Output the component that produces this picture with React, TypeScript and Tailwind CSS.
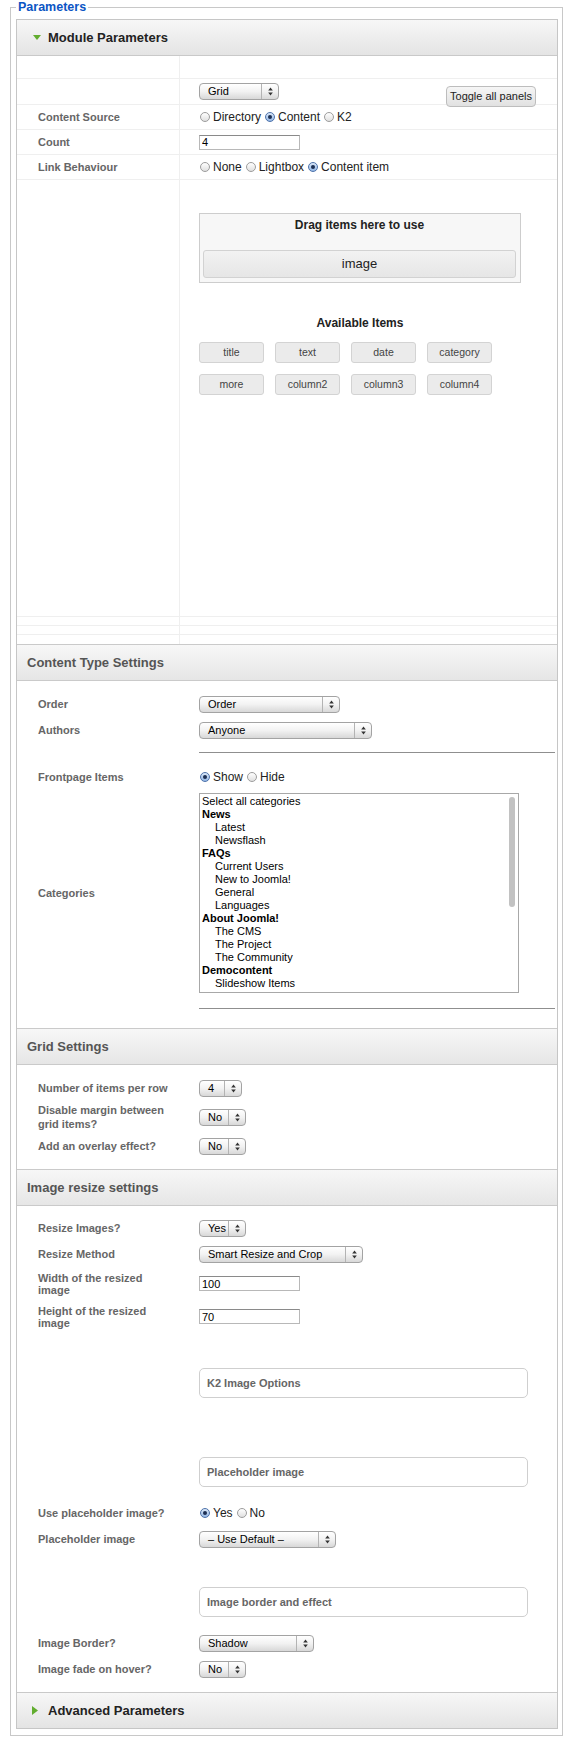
import React from 'react';

// Mac-style double arrow used in the select widgets
function Arrows() {
  return (
    <svg width="5" height="9" viewBox="0 0 5 9" className="block">
      <path d="M2.5 0.6 L4.8 3.6 L0.2 3.6 Z" fill="#333" />
      <path d="M2.5 8.4 L4.8 5.4 L0.2 5.4 Z" fill="#333" />
    </svg>
  );
}

function Select({ value, w }: { value: string; w: string }) {
  return (
    <div
      className={`flex h-[17px] ${w} items-stretch rounded-[4px] border border-[#a3a3a3] bg-linear-to-b from-white via-[#f2f2f2] to-[#d8d8d8] text-[11px] leading-none text-black`}
    >
      <span className="flex flex-1 items-center overflow-hidden whitespace-nowrap pl-[8px]">{value}</span>
      <span className="flex w-[17px] shrink-0 items-center justify-center border-l border-[#b3b3b3]">
        <Arrows />
      </span>
    </div>
  );
}

function Radio({ checked }: { checked?: boolean }) {
  if (checked) {
    return (
      <span className="flex h-[10px] w-[10px] items-center justify-center rounded-full border border-[#4d72aa] bg-linear-to-b from-[#dbe8f8] to-[#93b6e4]">
        <span className="h-[4px] w-[4px] rounded-full bg-[#1c2f52]" />
      </span>
    );
  }
  return <span className="h-[10px] w-[10px] rounded-full border border-[#9c9c9c] bg-linear-to-b from-white to-[#e0e0e0]" />;
}

function Radios({ options, checked }: { options: string[]; checked: number }) {
  return (
    <div className="ml-[1px] flex items-center text-[12px] leading-none text-[#222]">
      {options.map((o, i) => (
        <label key={o} className="mr-[4px] flex items-center">
          <Radio checked={i === checked} />
          <span className="ml-[3px]">{o}</span>
        </label>
      ))}
    </div>
  );
}

function TextInput({ value }: { value: string }) {
  return (
    <input
      readOnly
      value={value}
      className="h-[15px] w-[101px] border border-[#b8b8b8] border-t-[#8a8a8a] bg-white pl-[2px] text-[11px] leading-none text-black outline-none"
    />
  );
}

function Label({ children, lead = 'leading-[12px]' }: { children: React.ReactNode; lead?: string }) {
  return (
    <div className={`w-[162px] shrink-0 pl-[21px] pr-[6px] text-[11px] font-bold ${lead} text-[#666]`}>{children}</div>
  );
}

function Row({
  label,
  h,
  lead,
  mt = '',
  children,
}: {
  label: string;
  h: string;
  lead?: string;
  mt?: string;
  children?: React.ReactNode;
}) {
  return (
    <div className={`flex items-center ${h} ${mt}`}>
      <Label lead={lead}>{label}</Label>
      <div className="flex flex-1 items-center pl-[20px]">{children}</div>
    </div>
  );
}

// rows of the module parameter table, with the column divider
function TableRow({
  h,
  label,
  last,
  children,
}: {
  h: string;
  label?: string;
  last?: boolean;
  children?: React.ReactNode;
}) {
  return (
    <div className={`flex ${h} ${last ? '' : 'border-b border-[#efefef]'}`}>
      <div className="flex w-[163px] shrink-0 items-center border-r border-[#efefef] pl-[21px] text-[11px] font-bold text-[#666]">
        {label}
      </div>
      <div className="flex min-w-0 flex-1 items-center pl-[19px]">{children}</div>
    </div>
  );
}

function SectionHeader({ title }: { title: string }) {
  return (
    <div className="flex h-[37px] items-center border-y border-[#cacaca] bg-linear-to-b from-[#f7f7f7] to-[#e6e6e6] pl-[10px] text-[13px] font-bold text-[#555]">
      {title}
    </div>
  );
}

function InfoBox({ title, mt }: { title: string; mt: string }) {
  return (
    <div
      className={`${mt} ml-[182px] flex h-[30px] w-[329px] items-center rounded-[5px] border border-[#cfcfcf] pl-[7px] text-[11px] font-bold text-[#666]`}
    >
      {title}
    </div>
  );
}

const AVAILABLE = ['title', 'text', 'date', 'category', 'more', 'column2', 'column3', 'column4'];

const CATEGORIES: { name: string; level: 0 | 1 | 2 }[] = [
  { name: 'Select all categories', level: 0 },
  { name: 'News', level: 1 },
  { name: 'Latest', level: 2 },
  { name: 'Newsflash', level: 2 },
  { name: 'FAQs', level: 1 },
  { name: 'Current Users', level: 2 },
  { name: 'New to Joomla!', level: 2 },
  { name: 'General', level: 2 },
  { name: 'Languages', level: 2 },
  { name: 'About Joomla!', level: 1 },
  { name: 'The CMS', level: 2 },
  { name: 'The Project', level: 2 },
  { name: 'The Community', level: 2 },
  { name: 'Democontent', level: 1 },
  { name: 'Slideshow Items', level: 2 },
];

export default function App() {
  return (
    <div className="min-h-[1745px] bg-white font-['Liberation_Sans',Arial,sans-serif] text-[#222]">
      <fieldset className="ml-[10px] mr-[11px] border border-[#c8c8c8] pb-[6px] pl-[5px] pr-[4px] pt-[5px]">
        <legend className="px-[2px] text-[12.5px] font-bold leading-[14px] text-[#0b55c4]">Parameters</legend>

        <div className="border border-[#c6c6c6]">
          {/* Module Parameters */}
          <div className="flex h-[36px] items-center border-b border-[#c9c9c9] bg-linear-to-b from-[#f7f7f7] to-[#e4e4e4] pl-[16px]">
            <svg width="8" height="5" viewBox="0 0 8 5" className="block">
              <path d="M0 0 L8 0 L4 5 Z" fill="#62ad2f" />
            </svg>
            <span className="ml-[7px] text-[13px] font-bold text-[#222]">Module Parameters</span>
          </div>

          <TableRow h="h-[23px]" />
          <TableRow h="h-[26px]">
            <div className="flex h-full w-full items-center justify-between">
              <Select value="Grid" w="w-[80px]" />
              <button className="mr-[21px] mt-[9px] h-[21px] w-[90px] rounded-[4px] border border-[#bdbdbd] bg-linear-to-b from-[#f6f6f6] to-[#e1e1e1] text-[11px] leading-none text-[#222]">
                Toggle all panels
              </button>
            </div>
          </TableRow>
          <TableRow h="h-[25px]" label="Content Source">
            <Radios options={['Directory', 'Content', 'K2']} checked={1} />
          </TableRow>
          <TableRow h="h-[25px]" label="Count">
            <TextInput value="4" />
          </TableRow>
          <TableRow h="h-[25px]" label="Link Behaviour">
            <Radios options={['None', 'Lightbox', 'Content item']} checked={2} />
          </TableRow>
          <div className="flex h-[437px] border-b border-[#efefef]">
            <div className="w-[163px] shrink-0 border-r border-[#efefef]" />
            <div className="flex-1 pl-[19px] pt-[33px]">
              <div className="h-[70px] w-[322px] border border-[#cdcdcd] bg-[#f7f7f7] pb-[4px] pl-[3px] pr-[4px] pt-[4px]">
                <div className="text-center text-[12px] font-bold leading-[14px] text-[#222]">Drag items here to use</div>
                <div className="mt-[18px] flex h-[28px] items-center justify-center rounded-[3px] border border-[#d2d2d2] bg-linear-to-b from-[#f2f2f2] to-[#e6e6e6] text-[13px] text-[#222]">
                  image
                </div>
              </div>
              <div className="mt-[33px] w-[322px] text-center text-[12px] font-bold leading-[14px] text-[#222]">
                Available Items
              </div>
              <div className="mt-[12px] grid grid-cols-[repeat(4,65px)] gap-x-[11px] gap-y-[11px]">
                {AVAILABLE.map((a) => (
                  <div
                    key={a}
                    className="flex h-[21px] items-center justify-center rounded-[3px] border border-[#d3d3d3] bg-[#ebebeb] text-[10.5px] text-[#444]"
                  >
                    {a}
                  </div>
                ))}
              </div>
            </div>
          </div>
          <TableRow h="h-[9px]" />
          <TableRow h="h-[9px]" />
          <TableRow h="h-[9px]" last />

          {/* Content Type Settings */}
          <SectionHeader title="Content Type Settings" />
          <div className="pb-[19px] pt-[10px]">
            <Row label="Order" h="h-[26px]">
              <Select value="Order" w="w-[141px]" />
            </Row>
            <Row label="Authors" h="h-[26px]">
              <Select value="Anyone" w="w-[173px]" />
            </Row>
            <div className="ml-[182px] mr-[2px] mt-[9px] h-px bg-[#8f8f8f]" />
            <Row label="Frontpage Items" h="h-[26px]" mt="mt-[11px]">
              <Radios options={['Show', 'Hide']} checked={0} />
            </Row>
            <Row label="Categories" h="h-[200px]" mt="mt-[3px]">
              <div className="relative h-[200px] w-[320px] overflow-hidden border border-[#a8a8a8] bg-white pl-[2px] pt-[1px] text-[11px] leading-[13px] text-black">
                {CATEGORIES.map((c) => (
                  <div key={c.name} className={`${c.level === 1 ? 'font-bold' : ''} ${c.level === 2 ? 'pl-[13px]' : ''}`}>
                    {c.name}
                  </div>
                ))}
                <div className="absolute right-[3px] top-[3px] h-[110px] w-[6px] rounded-full bg-[#c2c2c2]" />
              </div>
            </Row>
            <div className="ml-[182px] mr-[2px] mt-[15px] h-px bg-[#8f8f8f]" />
          </div>

          {/* Grid Settings */}
          <SectionHeader title="Grid Settings" />
          <div className="pb-[10px] pt-[10px]">
            <Row label="Number of items per row" h="h-[26px]">
              <Select value="4" w="w-[43px]" />
            </Row>
            <Row label="Disable margin between grid items?" h="h-[32px]" lead="leading-[14px]">
              <Select value="No" w="w-[47px]" />
            </Row>
            <Row label="Add an overlay effect?" h="h-[26px]">
              <Select value="No" w="w-[47px]" />
            </Row>
          </div>

          {/* Image resize settings */}
          <SectionHeader title="Image resize settings" />
          <div className="pb-[10px] pt-[9px]">
            <Row label="Resize Images?" h="h-[26px]">
              <Select value="Yes" w="w-[47px]" />
            </Row>
            <Row label="Resize Method" h="h-[26px]">
              <Select value="Smart Resize and Crop" w="w-[164px]" />
            </Row>
            <Row label="Width of the resized image" h="h-[33px]">
              <TextInput value="100" />
            </Row>
            <Row label="Height of the resized image" h="h-[33px]">
              <TextInput value="70" />
            </Row>
            <InfoBox title="K2 Image Options" mt="mt-[35px]" />
            <InfoBox title="Placeholder image" mt="mt-[59px]" />
            <Row label="Use placeholder image?" h="h-[26px]" mt="mt-[13px]">
              <Radios options={['Yes', 'No']} checked={0} />
            </Row>
            <Row label="Placeholder image" h="h-[26px]">
              <Select value="– Use Default –" w="w-[137px]" />
            </Row>
            <InfoBox title="Image border and effect" mt="mt-[35px]" />
            <Row label="Image Border?" h="h-[26px]" mt="mt-[13px]">
              <Select value="Shadow" w="w-[115px]" />
            </Row>
            <Row label="Image fade on hover?" h="h-[26px]">
              <Select value="No" w="w-[47px]" />
            </Row>
          </div>

          {/* Advanced Parameters */}
          <div className="flex h-[36px] items-center border-t border-[#c9c9c9] bg-linear-to-b from-[#f7f7f7] to-[#e4e4e4] pl-[15px]">
            <svg width="6" height="9" viewBox="0 0 6 9" className="block">
              <path d="M0 0 L6 4.5 L0 9 Z" fill="#62ad2f" />
            </svg>
            <span className="ml-[10px] text-[13px] font-bold text-[#222]">Advanced Parameters</span>
          </div>
        </div>
      </fieldset>
    </div>
  );
}
